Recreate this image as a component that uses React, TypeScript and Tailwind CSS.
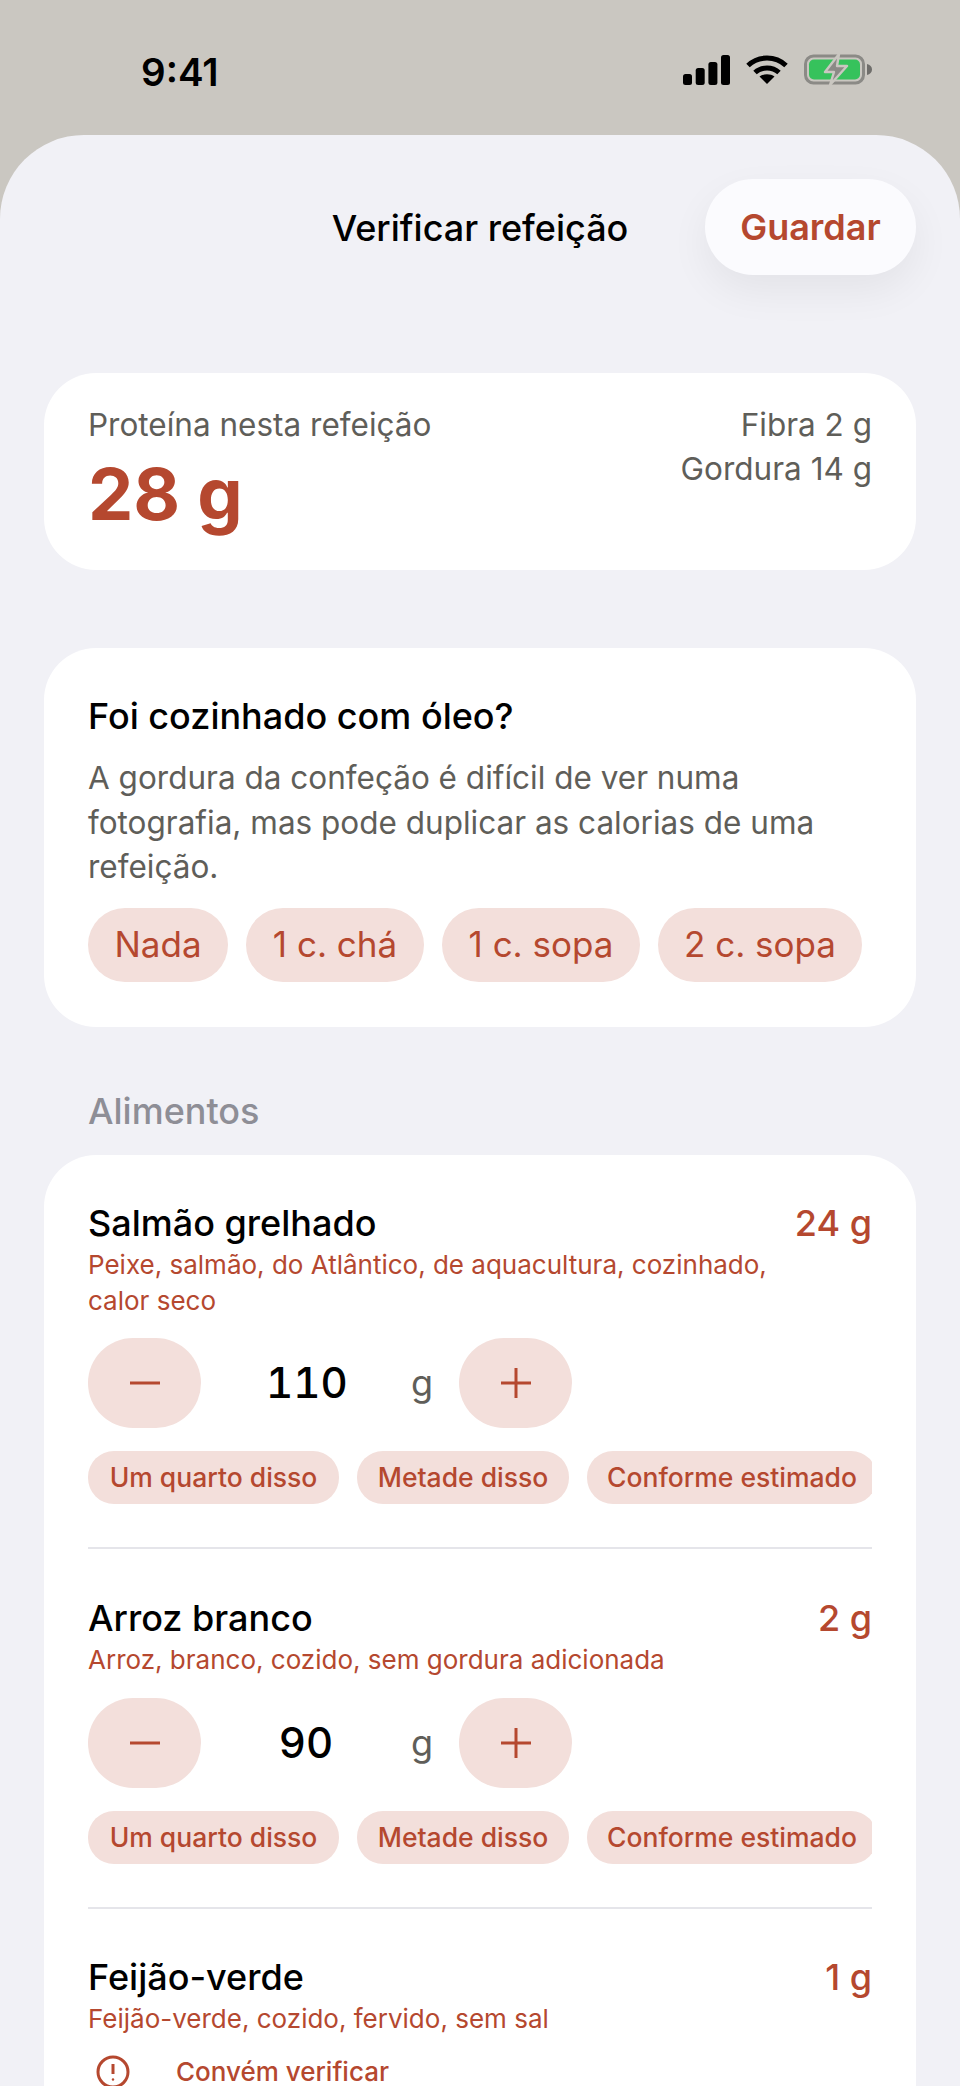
import React from "react";

const accent = "text-[#b5482f]";

function Signal() {
  return (
    <svg width="47" height="30" viewBox="0 0 47 30" fill="#000">
      <rect x="0" y="19" width="9" height="11" rx="2.5" />
      <rect x="12.7" y="13" width="9" height="17" rx="2.5" />
      <rect x="25.4" y="7" width="9" height="23" rx="2.5" />
      <rect x="38" y="0" width="9" height="30" rx="2.5" />
    </svg>
  );
}

function Wifi() {
  return (
    <svg width="42" height="29" viewBox="0 0 42 29" fill="none" stroke="#000" strokeWidth="5">
      <path d="M2 10.5C12.5 0.5 29.5 0.5 40 10.5" />
      <path d="M9 17.5C15.5 11.5 26.5 11.5 33 17.5" />
      <path d="M21 29l-7.5-7.4c4-3.2 11-3.2 15 0z" fill="#000" stroke="none" />
    </svg>
  );
}

function Battery() {
  return (
    <svg width="68" height="33" viewBox="0 0 68 33" fill="none">
      <rect x="1.5" y="3" width="58" height="27" rx="8" stroke="#8b8a86" strokeWidth="3" />
      <rect x="5" y="6.5" width="51" height="20" rx="5" fill="#36c25c" />
      <path d="M63 11c3 .6 5 2.8 5 5.5s-2 4.9-5 5.5z" fill="#6f6e6b" />
      <path d="M35 1L21 19h9l-4 13 17-19h-10z" fill="#8b8a86" stroke="#cac7c1" strokeWidth="2.4" strokeLinejoin="round" />
    </svg>
  );
}

function Pill({ children, className }: { children: React.ReactNode; className: string }) {
  return <div className={`flex shrink-0 items-center justify-center bg-[#f3dfdb] ${accent} ${className}`}>{children}</div>;
}

function Stepper({ value, top }: { value: string; top: string }) {
  return (
    <div className={`flex h-[90px] items-center ${top}`}>
      <Pill className="h-[90px] w-[113px] rounded-[45px]">
        <svg width="32" height="32" viewBox="0 0 32 32" stroke="currentColor" strokeWidth="3"><path d="M1 16h30" /></svg>
      </Pill>
      <div className="ml-[65px] w-[80px] text-center text-[42px] font-medium leading-none tabular-nums text-black">{value}</div>
      <div className="ml-[65px] w-[22px] text-[36px] leading-none text-[#5f5e59]">g</div>
      <Pill className="ml-[26px] h-[90px] w-[113px] rounded-[45px]">
        <svg width="32" height="32" viewBox="0 0 32 32" stroke="currentColor" strokeWidth="3"><path d="M1 16h30M16 1v30" /></svg>
      </Pill>
    </div>
  );
}

function Chips() {
  return (
    <div className="mt-[23px] flex gap-[18px] overflow-hidden text-[26.5px] font-medium">
      <Pill className="h-[53px] w-[251px] rounded-[26px]">Um quarto disso</Pill>
      <Pill className="h-[53px] w-[212px] rounded-[26px]">Metade disso</Pill>
      <Pill className="h-[53px] w-[290px] rounded-[26px]">Conforme estimado</Pill>
    </div>
  );
}

function FoodHead({ name, sub, g }: { name: string; sub: React.ReactNode; g: string }) {
  return (
    <>
      <div className="flex items-start justify-between">
        <div className="text-[36px] font-medium leading-[48px] text-black">{name}</div>
        <div className={`text-[36px] font-medium leading-[48px] ${accent}`}>{g}</div>
      </div>
      <div className={`text-[26px] leading-[36px] ${accent}`}>{sub}</div>
    </>
  );
}

export default function App() {
  return (
    <div className="h-[2086px] w-[960px] overflow-hidden bg-[#cac7c1] font-['Inter',sans-serif]">
      <div className="flex h-[135px] items-start justify-between pl-[141px] pr-[88px] pt-[47px]">
        <div className="text-[38.5px] font-semibold leading-[50px] text-black">9:41</div>
        <div className="mt-[6px] flex items-center gap-[16px]">
          <Signal />
          <Wifi />
          <Battery />
        </div>
      </div>
      <div className="h-[1951px] rounded-t-[84px] bg-[#f1f1f6] px-[44px]">
        <div className="relative flex h-[238px] items-start justify-center pt-[44px]">
          <div className="flex h-[97px] items-center text-[36px] font-medium text-black">Verificar refeição</div>
          <div className={`absolute right-0 top-[44px] flex h-[96px] w-[211px] items-center justify-center rounded-[48px] bg-[#fbfbfe] text-[36px] font-semibold shadow-[0_16px_40px_rgba(0,0,0,0.06)] ${accent}`}>
            Guardar
          </div>
        </div>

        <div className="flex h-[197px] justify-between rounded-[52px] bg-white px-[44px] pt-[30px]">
          <div>
            <div className="text-[31.5px] leading-[44px] text-[#5f5e59]">Proteína nesta refeição</div>
            <div className={`mt-[7px] text-[72px] font-bold leading-[80px] ${accent}`}>28 g</div>
          </div>
          <div className="text-right text-[31.5px] leading-[44px] text-[#5f5e59]">
            <div>Fibra 2 g</div>
            <div>Gordura 14 g</div>
          </div>
        </div>

        <div className="mt-[78px] h-[379px] rounded-[52px] bg-white px-[44px] pt-[44px]">
          <div className="text-[36px] font-medium leading-[48px] text-black">Foi cozinhado com óleo?</div>
          <div className="mt-[16px] w-[780px] text-[31.5px] leading-[44.5px] text-[#5f5e59]">
            A gordura da confeção é difícil de ver numa fotografia, mas pode duplicar as calorias de uma refeição.
          </div>
          <div className="mt-[18px] flex gap-[18px] text-[35px]">
            <Pill className="h-[74px] w-[140px] rounded-[37px]">Nada</Pill>
            <Pill className="h-[74px] w-[178px] rounded-[37px]">1 c. chá</Pill>
            <Pill className="h-[74px] w-[198px] rounded-[37px]">1 c. sopa</Pill>
            <Pill className="h-[74px] w-[204px] rounded-[37px]">2 c. sopa</Pill>
          </div>
        </div>

        <div className="mt-[62px] pl-[44px] text-[36px] font-medium leading-[44px] text-[#8e8e96]">Alimentos</div>

        <div className="mt-[22px] rounded-t-[52px] bg-white px-[44px] pt-[44px]">
          <FoodHead name="Salmão grelhado" g="24 g" sub={<>Peixe, salmão, do Atlântico, de aquacultura, cozinhado,<br />calor seco</>} />
          <Stepper value="110" top="mt-[19px]" />
          <Chips />
          <div className="mt-[43px] h-[2px] bg-[#e5e5ea]" />

          <div className="pt-[45px]">
            <FoodHead name="Arroz branco" g="2 g" sub="Arroz, branco, cozido, sem gordura adicionada" />
            <Stepper value="90" top="mt-[20px]" />
            <Chips />
          </div>
          <div className="mt-[43px] h-[2px] bg-[#e5e5ea]" />

          <div className="pt-[44px]">
            <FoodHead name="Feijão-verde" g="1 g" sub="Feijão-verde, cozido, fervido, sem sal" />
            <div className={`mt-[17px] flex items-center ${accent}`}>
              <svg className="ml-[8px]" width="34" height="34" viewBox="0 0 34 34" fill="none" stroke="currentColor" strokeWidth="3">
                <circle cx="17" cy="17" r="15" />
                <path d="M17 9v10" />
                <circle cx="17" cy="24.5" r="1.2" fill="currentColor" stroke="none" />
              </svg>
              <div className="ml-[46px] text-[26px] font-medium leading-[36px]">Convém verificar</div>
            </div>
          </div>
        </div>
      </div>
    </div>
  );
}
